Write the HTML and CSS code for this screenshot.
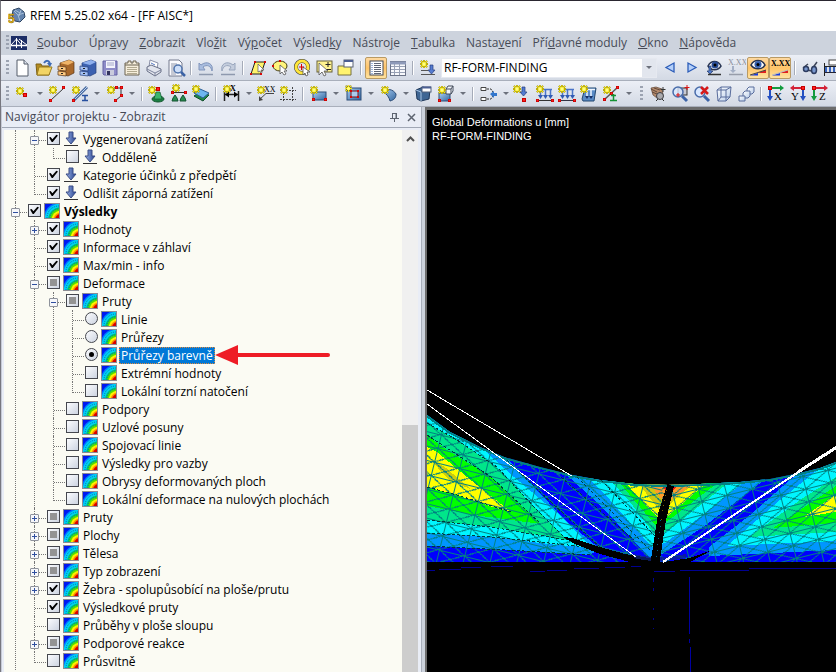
FILE: index.html
```html
<!DOCTYPE html>
<html lang="cs">
<head>
<meta charset="utf-8">
<title>RFEM 5.25.02 x64 - [FF AISC*]</title>
<link rel="stylesheet" href="styles.css">
</head>
<body>
<svg class="sprite" aria-hidden="true">
  <defs>
    <linearGradient id="blue" x1="0" y1="0" x2="1" y2="1"><stop offset="0" stop-color="#a9cdf2"/><stop offset="1" stop-color="#33669f"/></linearGradient>
    <linearGradient id="glass" x1="0" y1="0" x2="1" y2="1"><stop offset="0" stop-color="#fff"/><stop offset="1" stop-color="#b9cdea"/></linearGradient>
    <linearGradient id="loadfill" x1="0" x2="1"><stop offset="0" stop-color="#9db4e8"/><stop offset="1" stop-color="#23408c"/></linearGradient>
    <clipPath id="isoclip"><rect x="1" y="1" width="14" height="14"/></clipPath>
  </defs>
  <symbol id="iso" viewBox="0 0 16 16">
    <rect width="16" height="16" fill="#8c8c94"/>
    <g clip-path="url(#isoclip)">
      <rect x="1" y="1" width="14" height="14" fill="#0018f0"/>
      <circle cx="17" cy="17" r="18" fill="#0078ff"/>
      <circle cx="17" cy="17" r="16.500" fill="#00d0f4"/>
      <circle cx="17" cy="17" r="13" fill="#00c86c"/>
      <circle cx="17" cy="17" r="11.500" fill="#50e000"/>
      <circle cx="17" cy="17" r="9.500" fill="#fff000"/>
      <circle cx="17" cy="17" r="7.500" fill="#ff8c00"/>
      <circle cx="17" cy="17" r="6" fill="#d80000"/>
      <path d="M3 15C3 8 8 3 15 3M6 15C6 10 10 6 15 6" fill="none" stroke="#0078b4" stroke-dasharray="1 1"/>
    </g>
  </symbol>
  <symbol id="load" viewBox="0 0 16 16">
    <path d="M6 1h4v6h3l-5 6-5-6h3z" fill="url(#loadfill)" stroke="#3a4d85"/>
    <path d="M1 14.500h14" stroke="#333"/>
  </symbol>
  <symbol id="star" viewBox="0 0 9 9">
    <path d="M4.500 0v9M0 4.500h9M1 1l7 7M8 1l-7 7" stroke="#7d7000" stroke-width="2"/>
    <path d="M4.500 0v9M0 4.500h9M1 1l7 7M8 1l-7 7" stroke="#ffee10" stroke-width="1.200"/>
    <circle cx="4.500" cy="4.500" r="2" fill="#ffff80"/>
  </symbol>
  <symbol id="node" viewBox="0 0 4 4"><rect width="4" height="4" fill="#c80000"/><rect x="1" y="1" width="2" height="2" fill="#ff2020"/></symbol>
</svg>

<div class="window">
  <header class="titlebar">
    <svg class="applogo" viewBox="0 0 18 18"><path d="M5 3l6-2 5 4 1 5-5 5-5-1-3-5z" fill="#6484ae" stroke="#2d4463"/><path d="M6 4l4 4 6-2M10 8l2 6M7 3l5 3M13 3l-2 6" stroke="#b8cbe2" fill="none" stroke-width=".8"/><text x="0" y="16" class="logodigit">5</text></svg>
    <h1>RFEM 5.25.02 x64 - [FF AISC*]</h1>
  </header>

  <nav class="menubar">
    <span class="grip"></span>
    <svg class="doclogo" viewBox="0 0 16 14"><rect width="16" height="14" fill="#1d2e66"/><path d="M0 9.500h16" stroke="#fff" stroke-width="1.500"/><path d="M5.500 2v10M10.500 4v8M5.500 3L0 9M5.500 3l5 6M8 3l8 6" stroke="#fff" fill="none"/></svg>
    <a href="#"><u>S</u>oubor</a><a href="#">Úpr<u>a</u>vy</a><a href="#"><u>Z</u>obrazit</a><a href="#">Vlo<u>ž</u>it</a><a href="#">Vý<u>p</u>očet</a><a href="#">Výsled<u>k</u>y</a><a href="#">Nástro<u>j</u>e</a><a href="#"><u>T</u>abulka</a><a href="#">Nasta<u>v</u>ení</a><a href="#">Pří<u>d</u>avné moduly</a><a href="#"><u>O</u>kno</a><a href="#"><u>N</u>ápověda</a>
  </nav>

  <div class="toolbar">
    <span class="grip"></span>
    <button class="tool" aria-label="Nový"><svg viewBox="0 0 20 20"><path d="M5 2h7l4 4v12H5z" fill="#fff" stroke="#555c6b"/><path d="M12 2v4h4" fill="#dde3ee" stroke="#555c6b"/></svg></button>
    <button class="tool" aria-label="Otevřít"><svg viewBox="0 0 20 20"><path d="M2 6h5l1 2h7v9H3z" fill="#b48a20" stroke="#7d6115"/><path d="M5 9h13l-3 8H3z" fill="#f2d465" stroke="#9a7c1e"/><path d="M10 5c2-3 5-3 6 1" stroke="#3f6bb5" stroke-width="2" fill="none"/><path d="M13 5h5l-2 4z" fill="#3f6bb5"/></svg></button>
    <button class="tool" aria-label="Projekty"><svg viewBox="0 0 20 20"><path d="M4 5l9-3 5 2v11l-6 3-8-2z" fill="#a9682a" stroke="#57371b" stroke-width=".7"/><path d="M4 5l9-3 5 2-6 3z" fill="#f0b468"/><path d="M2 8l8 1v4l-8-1zM2 13l8 1v4l-8-1z" fill="#ffc980" stroke="#57371b" stroke-width=".7"/><path d="M5 10.500h2M5 15.500h2" stroke="#222"/></svg></button>
    <button class="tool" aria-label="Archiv"><svg viewBox="0 0 20 20"><path d="M4 5l9-3 5 2v11l-6 3-8-2z" fill="#3c61b0" stroke="#253f7c" stroke-width=".7"/><path d="M4 5l9-3 5 2-6 3z" fill="#8fb0ee"/><path d="M2 8l8 1v4l-8-1zM2 13l8 1v4l-8-1z" fill="#a3c0f4" stroke="#253f7c" stroke-width=".7"/><path d="M5 10.500h2M5 15.500h2" stroke="#222"/></svg></button>
    <button class="tool" aria-label="Uložit"><svg viewBox="0 0 20 20"><path d="M3 3h14v14H4l-1-1z" fill="#8e8cc8" stroke="#6563a2"/><rect x="6" y="3" width="9" height="7" fill="#f4f5fc"/><path d="M7 5h7M7 7h7" stroke="#a3a6c8"/><rect x="6" y="12" width="8" height="5" fill="#c9cbdc"/><rect x="7" y="13" width="3" height="4" fill="#33345e"/></svg></button>
    <button class="tool" aria-label="Protokol"><svg viewBox="0 0 20 20"><path d="M3 5h3V3h3v2h2V3h3v2h3v12H3z" fill="#f6eedb" stroke="#6b6250"/><path d="M3 7h14" stroke="#6b6250"/><path d="M5 9.500h10M5 11.500h10M5 13.500h10M5 15.500h10" stroke="#b1a98f"/></svg></button>
    <button class="tool" aria-label="Tisk"><svg viewBox="0 0 20 20"><path d="M5 9l1-7 8 3-1 6z" fill="#fff" stroke="#8a90a8"/><path d="M3 9l4-2 10 4v3l-6 4-8-5z" fill="#e2e5ee" stroke="#686f86"/><path d="M3 11l8 4 6-3M11 15v3" stroke="#7c849d" fill="none"/><path d="M7 5l4 2" stroke="#5578c2"/></svg></button>
    <button class="tool" aria-label="Náhled"><svg viewBox="0 0 20 20"><path d="M3 2h10l3 3v13H3z" fill="#fbfbff" stroke="#747b8e"/><path d="M5 6h6M5 8h5M5 10h4M5 12h4M5 14h5M5 16h5" stroke="#9198aa"/><circle cx="12" cy="11" r="4" fill="#cfe0fa" stroke="#4f73ac" stroke-width="1.500"/><path d="M15 14l4 4" stroke="#3b62a5" stroke-width="2.500"/></svg></button>
    <span class="sep"></span>
    <button class="tool" aria-label="Zpět"><svg viewBox="0 0 20 20"><path d="M3 5v7h6L7 9c4-3 8-1 9 4 2-7-5-11-11-6z" fill="#a9bddf" stroke="#8195bb"/><path d="M3 16.500h14" stroke="#8e99ae" stroke-width="1.500"/></svg></button>
    <button class="tool" aria-label="Znovu"><svg viewBox="0 0 20 20"><path d="M17 5v7h-6l2-3c-4-3-8-1-9 4-2-7 5-11 11-6z" fill="#c4cddd" stroke="#98a5bc"/><path d="M3 16.500h14" stroke="#8e99ae" stroke-width="1.500"/></svg></button>
    <span class="sep"></span>
    <button class="tool" aria-label="Výběr rovnoběžníkem"><svg viewBox="0 0 20 20"><path d="M7 4h10l-4 12H3z" fill="#fff36b" stroke="#222"/><path d="M10 6v8l2-1 1 3 1-1-1-3h3z" fill="#fff" stroke="#555" stroke-width=".7"/><use href="#node" x="6" y="3" width="2" height="2"/><use href="#node" x="16" y="3" width="2" height="2"/><use href="#node" x="2" y="15" width="2" height="2"/><use href="#node" x="12" y="15" width="2" height="2"/></svg></button>
    <button class="tool" aria-label="Výběr elipsou"><svg viewBox="0 0 20 20"><ellipse cx="10" cy="8" rx="7" ry="5" fill="#fff47c" stroke="#443c12"/><path d="M10 7v9l2-2 2 3 2-1-2-3h3z" fill="#fff" stroke="#555" stroke-width=".8"/><use href="#node" x="2" y="7" width="2" height="2"/><use href="#node" x="9" y="2" width="2" height="2"/></svg></button>
    <button class="tool" aria-label="Výběr prstencem"><svg viewBox="0 0 20 20"><circle cx="10" cy="9" r="6" fill="none" stroke="#333" stroke-width="4"/><circle cx="10" cy="9" r="6" fill="none" stroke="#ffe63a" stroke-width="3"/><path d="M11 9v8l2-2 1 3 2-1-1-3h3z" fill="#fff" stroke="#555" stroke-width=".8"/><path d="M7 9h5M9.500 6v6" stroke="#d00"/></svg></button>
    <button class="tool" aria-label="Výběr"><svg viewBox="0 0 20 20"><rect x="3" y="3" width="15" height="11" fill="#fff390" stroke="#666038"/><path d="M14 4v5M11.500 6.500h5M12 11.500h5" stroke="#222"/><path d="M5 5v12l3-3 2 4 2-1-2-4h4z" fill="#fff" stroke="#555" stroke-width=".8"/></svg></button>
    <button class="tool" aria-label="Složka"><svg viewBox="0 0 20 20"><path d="M2 8h13v9H2z" fill="#fff36e" stroke="#777140"/><rect x="8" y="2" width="9" height="7" fill="#fff" stroke="#5b6374"/><path d="M8 3h9" stroke="#4c5f93" stroke-width="2"/></svg></button>
    <span class="sep"></span>
    <button class="tool on" aria-label="Navigátor"><svg viewBox="0 0 20 20"><rect x="4" y="3" width="13" height="14" fill="#fff" stroke="#444a57"/><path d="M8 5.500h7M8 7.500h7M8 9.500h7M8 11.500h7M8 13.500h7M8 15.500h7" stroke="#5f6675"/><path d="M6 5v11" stroke="#3f6bb5" stroke-dasharray="1 1"/></svg></button>
    <button class="tool" aria-label="Tabulky"><svg viewBox="0 0 20 20"><rect x="2.500" y="3.500" width="15" height="14" fill="#f8f9fc" stroke="#6b7387"/><path d="M2 5h16" stroke="#8e9ab9" stroke-width="3"/><path d="M6.500 6v11M11.500 6v11M3 8.500h14M3 11.500h14M3 14.500h14" stroke="#98a1b5"/></svg></button>
    <span class="sep"></span>
    <button class="tool" aria-label="Nový zatěžovací stav"><svg viewBox="0 0 20 20"><use href="#star" x="2" y="2" width="8" height="8"/><path d="M12 7h3v5h2l-3.500 4L10 12h2z" fill="#547bd0" stroke="#263e80" stroke-width=".7"/><path d="M3 12.500h7M3 16.500h14" stroke="#555"/></svg></button>
    <span class="combo"><select aria-label="Zatěžovací stav"><option>RF-FORM-FINDING</option></select></span>
    <button class="tool" aria-label="Předchozí"><svg viewBox="0 0 20 20"><path d="M14 5v9L6 9.500z" fill="#b5d0fa" stroke="#2b5cb8" stroke-width="1.300"/></svg></button>
    <button class="tool" aria-label="Následující"><svg viewBox="0 0 20 20"><path d="M6 5v9l8-4.500z" fill="#b5d0fa" stroke="#2b5cb8" stroke-width="1.300"/></svg></button>
    <button class="tool" aria-label="Zobrazit zatížení"><svg viewBox="0 0 20 20"><path d="M4 8c3-6 10-6 13 0-3 5-10 5-13 0z" fill="#fff" stroke="#283452" stroke-width="1.500"/><circle cx="11" cy="7" r="3.500" fill="#294d96"/><circle cx="11" cy="7" r="1.500"/><path d="M5 8h2v5h2l-3 3-3-3h2z" fill="#517cce" stroke="#233a6b" stroke-width=".7"/><path d="M4 16.500h13" stroke="#333" stroke-width="1.500"/></svg></button>
    <button class="tool" aria-label="Hodnoty zatížení"><svg viewBox="0 0 20 20"><text x="2" y="7" class="xx dim">X.XX</text><path d="M6 8h2v4h2l-3 3-3-3h2z" fill="#a3afc5"/><path d="M3 16.500h14" stroke="#979daa" stroke-width="1.500"/></svg></button>
    <button class="tool on" aria-label="Zobrazit výsledky"><svg viewBox="0 0 20 20"><path d="M3 7c3-6 11-6 14 0-3 5-11 5-14 0z" fill="#fff" stroke="#26324f" stroke-width="1.500"/><circle cx="10" cy="6.500" r="3.500" fill="#355fae"/><circle cx="10" cy="6.500" r="1.500"/><path d="M2 17.500h8V15z" fill="#173be0"/><path d="M10 15l8-3v3h-8z" fill="#e02020"/><path d="M2 17l16-5" stroke="#444"/></svg></button>
    <button class="tool on" aria-label="Hodnoty výsledků"><svg viewBox="0 0 20 20"><text x="1" y="8" class="xx">X.XX</text><path d="M2 17.500h8V15z" fill="#173be0"/><path d="M10 15l8-3v3h-8z" fill="#e02020"/><path d="M2 17l16-5" stroke="#bbb"/></svg></button>
    <span class="sep"></span>
    <button class="tool" aria-label="Brýle"><svg viewBox="0 0 20 20"><path d="M3 10l5-4M12 11l5-7M8 12l3 1" stroke="#3c4458" stroke-width="1.500"/><ellipse cx="6" cy="11" rx="2.500" ry="2.500" fill="#7897ce" stroke="#2d3c60" stroke-width="1.500"/><ellipse cx="14" cy="12" rx="2.500" ry="3.500" fill="#7897ce" stroke="#2d3c60" stroke-width="1.500"/></svg></button>
    <button class="tool" aria-label="Soubor zatížení"><svg viewBox="0 0 20 20"><rect x="7" y="2" width="10" height="5" fill="#fff" stroke="#444"/><path d="M2.500 5v13M2 8.500h15" stroke="#222"/><path d="M4 9v5M8 9v5M12 9v5M16 9v5" stroke="#3864bd" stroke-width="2"/><path d="M2 14.500h16" stroke="#223"/></svg></button>
  </div>

  <div class="toolbar">
    <span class="grip"></span>
    <button class="tool" aria-label="Uzel"><svg viewBox="0 0 20 20"><use href="#star" x="4" y="3" width="8" height="8"/><use href="#node" x="11" y="9" width="4" height="4"/></svg></button><button class="drop" aria-label="Více"></button>
    <button class="tool" aria-label="Linie"><svg viewBox="0 0 20 20"><path d="M4 16L17 4" stroke="#333"/><use href="#star" x="2" y="2" width="8" height="8"/><use href="#node" x="2" y="15" width="3" height="3"/><use href="#node" x="15" y="2" width="3" height="3"/></svg></button>
    <button class="tool" aria-label="Prut"><svg viewBox="0 0 20 20"><path d="M5 16L18 3" stroke="#4c6b9e" stroke-width="3"/><path d="M5 16L18 3" stroke="#b5d0f4"/><use href="#star" x="3" y="2" width="8" height="8"/><use href="#node" x="3" y="15" width="3" height="3"/><path d="M13 11.500h6M16 12v5M13 16.500h6" stroke="#27509f" stroke-width="1.500"/></svg></button><button class="drop" aria-label="Více"></button>
    <button class="tool" aria-label="Polylinie"><svg viewBox="0 0 20 20"><path d="M8 4h9v8l-6 5" stroke="#333" fill="none"/><use href="#star" x="3" y="2" width="8" height="8"/><use href="#node" x="11" y="2" width="3" height="3"/><use href="#node" x="16" y="2" width="3" height="3"/><use href="#node" x="16" y="10" width="3" height="3"/><use href="#node" x="10" y="15" width="3" height="3"/></svg></button><button class="drop" aria-label="Více"></button>
    <span class="sep"></span>
    <button class="tool" aria-label="Podpora"><svg viewBox="0 0 20 20"><ellipse cx="11" cy="15" rx="6" ry="3" fill="#1c7e43" stroke="#11562c"/><path d="M9 8h4l2 7H7z" fill="#3cb56c" stroke="#11562c" stroke-width=".7"/><use href="#star" x="1" y="2" width="8" height="8"/><use href="#node" x="9" y="3" width="4" height="4"/></svg></button>
    <button class="tool" aria-label="Liniová podpora"><svg viewBox="0 0 20 20"><path d="M3 8.500h14" stroke="#333"/><path d="M6 11l2 3 1 3H3l1-3zM14 11l2 3 1 3h-6l1-3z" fill="#278d50" stroke="#145331"/><use href="#star" x="3" y="0" width="8" height="8"/><use href="#node" x="2" y="7" width="3" height="3"/><use href="#node" x="15" y="7" width="3" height="3"/></svg></button>
    <button class="tool" aria-label="Plošná podpora"><svg viewBox="0 0 20 20"><path d="M3 12l6-4 9 3-6 6z" fill="#208a49" stroke="#104e2b"/><path d="M3 9l6-4 9 4-6 5z" fill="#6db6f0" stroke="#2d6097"/><use href="#star" x="1" y="1" width="8" height="8"/></svg></button>
    <span class="sep"></span>
    <button class="tool" aria-label="Kóta"><svg viewBox="0 0 20 20"><path d="M3.500 7v10M17.500 7v10M4 10.500h13" stroke="#222" stroke-width="1.500"/><path d="M4 10.500l4-3v6zM17 10.500l-4-3v6z"/><use href="#star" x="2" y="1" width="8" height="8"/><text x="9" y="7" class="xx">X</text></svg></button><button class="drop" aria-label="Více"></button>
    <button class="tool" aria-label="Poznámka"><svg viewBox="0 0 20 20"><path d="M18 9.500h-8L3 16" stroke="#444" fill="none"/><path d="M3 17v-5l4 4z" fill="#444"/><use href="#star" x="1" y="2" width="8" height="8"/><text x="8" y="8" class="xx thin">XX</text></svg></button>
    <button class="tool" aria-label="Rastr"><svg viewBox="0 0 20 20"><path d="M2 6.500h16M2 15.500h16M5.500 3v15M14.500 3v15" stroke="#444" stroke-dasharray="2 1"/><use href="#star" x="2" y="2" width="8" height="8"/></svg></button>
    <span class="sep"></span>
    <button class="tool" aria-label="Plocha"><svg viewBox="0 0 20 20"><rect x="5" y="8" width="13" height="8" fill="url(#blue)" stroke="#2c4c77"/><use href="#star" x="2" y="2" width="8" height="8"/><use href="#node" x="4" y="14" width="3" height="3"/><use href="#node" x="16" y="14" width="3" height="3"/></svg></button><button class="drop" aria-label="Více"></button>
    <button class="tool" aria-label="Otvor"><svg viewBox="0 0 20 20"><rect x="4" y="4" width="14" height="12" fill="url(#blue)" stroke="#2c4c77"/><rect x="8" y="7" width="7" height="6" fill="#a9cbee" stroke="#70181c"/><use href="#star" x="2" y="1" width="7" height="7"/><use href="#node" x="7" y="6" width="2" height="2"/><use href="#node" x="14" y="6" width="2" height="2"/><use href="#node" x="7" y="12" width="2" height="2"/><use href="#node" x="14" y="12" width="2" height="2"/></svg></button><button class="drop" aria-label="Více"></button>
    <button class="tool" aria-label="Zakřivená plocha"><svg viewBox="0 0 20 20"><path d="M5 8c4-4 10-3 13 2 0 4-2 6-6 7-1-4-3-7-7-9z" fill="url(#blue)" stroke="#2c4c77"/><use href="#star" x="3" y="2" width="8" height="8"/></svg></button><button class="drop" aria-label="Více"></button>
    <button class="tool" aria-label="Těleso"><svg viewBox="0 0 20 20"><path d="M3 6l7-3 7 3-1 9-8 2-4-2z" fill="#3f6694" stroke="#1e3759"/><path d="M3 6l5 2v9" fill="none" stroke="#a9c6e6"/><rect x="9" y="3" width="9" height="5" fill="#fff" stroke="#52617b"/><path d="M9 3.500h9" stroke="#4c5f93" stroke-width="2"/></svg></button>
    <button class="tool" aria-label="Kvádr"><svg viewBox="0 0 20 20"><rect x="4" y="9" width="11" height="8" fill="url(#blue)" stroke="#2c4c77"/><path d="M11 5h5v5h-5zM11 5l2-3h5v5l-2 3M16 5l2-3" fill="#f3f6fb" stroke="#444c5c"/><use href="#star" x="3" y="2" width="8" height="8"/><use href="#node" x="3" y="15" width="3" height="3"/><use href="#node" x="13" y="15" width="3" height="3"/></svg></button><button class="drop" aria-label="Více"></button>
    <span class="sep"></span>
    <button class="tool" aria-label="Spojit"><svg viewBox="0 0 20 20"><path d="M3 3.500h5v3H3zM3 13.500h5v3H3z" fill="#fff" stroke="#444"/><path d="M9 5h4l2 3M9 15h4l2-3" stroke="#333" fill="none" stroke-dasharray="2 1"/><path d="M12 10l4-3v2h3v3h-3v2z" fill="#3276cc"/></svg></button><button class="drop" aria-label="Více"></button>
    <button class="tool" aria-label="Uzlové zatížení"><svg viewBox="0 0 20 20"><path d="M9 3h3v5h2l-3.500 4L7 8h2z" fill="#527bd2" stroke="#243d7f" stroke-width=".7"/><use href="#star" x="0" y="1" width="8" height="8"/><use href="#node" x="9" y="14" width="4" height="4"/></svg></button>
    <button class="tool" aria-label="Zatížení prutu"><svg viewBox="0 0 20 20"><path d="M4 5.500h13M5.500 6v6M10.500 6v6M15.500 6v6" stroke="#4a74c8" stroke-width="1.500"/><path d="M3 11h5l-2.500 4zM8 11h5l-2.500 4zM13 11h5l-2.500 4z" fill="#315bb4"/><path d="M3 16.500h15" stroke="#333"/><use href="#star" x="1" y="1" width="8" height="8"/><use href="#node" x="1" y="15" width="3" height="3"/><use href="#node" x="16" y="15" width="3" height="3"/></svg></button>
    <button class="tool" aria-label="Zatížení linie"><svg viewBox="0 0 20 20"><path d="M4 5.500h13M5.500 6v6M10.500 6v6M15.500 6v6" stroke="#4a74c8" stroke-width="1.500"/><path d="M3 11h5l-2.500 4zM8 11h5l-2.500 4zM13 11h5l-2.500 4z" fill="#315bb4"/><path d="M2 16.500h16" stroke="#334"/><use href="#star" x="1" y="1" width="8" height="8"/><use href="#node" x="1" y="15" width="3" height="3"/><use href="#node" x="16" y="15" width="3" height="3"/></svg></button>
    <button class="tool" aria-label="Zatížení plochy"><svg viewBox="0 0 20 20"><path d="M3 15l3-11h11l-2 13H4z" fill="#5a8bc6" stroke="#23476f"/><path d="M8 5v7M12 5v7M7 5.500h9" stroke="#eef5ff" stroke-width="1.500"/><path d="M6 12l2 3 2-3M10 12l2 3 2-3" fill="#152f66"/><use href="#star" x="1" y="1" width="8" height="8"/></svg></button>
    <button class="tool" aria-label="Imperfekce"><svg viewBox="0 0 20 20"><path d="M4 15L17 3" stroke="#555" stroke-width="1.500"/><use href="#star" x="2" y="2" width="8" height="8"/><use href="#node" x="2" y="14" width="3" height="3"/><use href="#node" x="9" y="8" width="3" height="3"/><use href="#node" x="15" y="2" width="3" height="3"/><path d="M12.500 10v7M9 16.500h7M10 11.500h5" stroke="#149333" stroke-width="1.500"/></svg></button><button class="drop" aria-label="Více"></button>
    <span class="grip inner"></span>
    <button class="tool" aria-label="Posun"><svg viewBox="0 0 20 20"><path d="M3 4l5-1 6 2 1 6-6 3-4-3z" fill="#b58a6c" stroke="#60483a" stroke-width=".7"/><path d="M3 5l6 3M4 8l5 2M6 4l6 2" stroke="#60483a"/><circle cx="12" cy="12" r="3.500" fill="#a9a9ad" stroke="#3d3d42"/><path d="M15 3v5M12.500 5.500h5M8 17l2-2M16 17l-2-2" stroke="#333"/></svg></button>
    <button class="tool" aria-label="Zvětšit oknem"><svg viewBox="0 0 20 20"><rect x="8" y="4" width="9" height="7" fill="#c7c9d2" stroke="#333"/><circle cx="8" cy="8" r="5" fill="#d9e8ff" fill-opacity=".8" stroke="#496caa" stroke-width="1.500"/><path d="M12 12l5 5" stroke="#3c63a7" stroke-width="3"/><path d="M17 1v5M14.500 3.500h5M8 9v4M6 11h4" stroke="#d11"/></svg></button>
    <button class="tool" aria-label="Zvětšit vše"><svg viewBox="0 0 20 20"><circle cx="8" cy="8" r="5" fill="#d9e8ff" stroke="#496caa" stroke-width="1.500"/><path d="M12 12l5 5" stroke="#3c63a7" stroke-width="3"/><path d="M9 3l7 7M16 3l-7 7" stroke="#d61a1a" stroke-width="2.500"/></svg></button>
    <button class="tool" aria-label="Izometrie"><svg viewBox="0 0 20 20"><path d="M3 6l4-3h10l-1 10-4 4H4z" fill="url(#glass)" stroke="#596c9c"/><path d="M3 6h9v11M12 6l5-3M7 3v10h9M4 17l3-4" fill="none" stroke="#596c9c"/></svg></button>
    <button class="tool" aria-label="Pohled"><svg viewBox="0 0 20 20"><path d="M11 5l2-2h5v5l-2 2h-5z" fill="url(#glass)" stroke="#596c9c"/><path d="M7 9l2-2h5v5l-2 2H7z" fill="url(#glass)" stroke="#596c9c"/><path d="M3 12h6v5H3z" fill="url(#glass)" stroke="#596c9c"/></svg></button>
    <span class="sep"></span>
    <button class="tool" aria-label="Pohled X"><svg viewBox="0 0 20 20"><path d="M4 4h11" stroke="#129b3e" stroke-width="2"/><path d="M14 1l4 3-4 3z" fill="#129b3e"/><path d="M4 4v10" stroke="#234fc1" stroke-width="2"/><path d="M1 12l3 5 3-5z" fill="#234fc1"/><use href="#node" x="2" y="2" width="4" height="4"/><text x="8" y="16" class="axis">X</text></svg></button>
    <button class="tool" aria-label="Pohled Y"><svg viewBox="0 0 20 20"><path d="M5 4h11" stroke="#d32136" stroke-width="2"/><path d="M6 1L2 4l4 3z" fill="#d32136"/><path d="M15 4v10" stroke="#234fc1" stroke-width="2"/><path d="M12 12l3 5 3-5z" fill="#234fc1"/><use href="#node" x="13" y="2" width="4" height="4"/><text x="3" y="16" class="axis">Y</text></svg></button>
    <button class="tool" aria-label="Pohled Z"><svg viewBox="0 0 20 20"><path d="M4 4h11" stroke="#d32136" stroke-width="2"/><path d="M14 1l4 3-4 3z" fill="#d32136"/><path d="M4 4v10" stroke="#129b3e" stroke-width="2"/><path d="M1 12l3 5 3-5z" fill="#129b3e"/><use href="#node" x="2" y="2" width="4" height="4"/><text x="9" y="16" class="axis">Z</text></svg></button>
  </div>

  <main class="work">
    <section class="dock">
      <div class="dockhead">
        <h2>Navigátor projektu - Zobrazit</h2>
        <button aria-label="Připnout"><svg viewBox="0 0 9 9"><path d="M2.500 0v5M6 0v5M2 .5h5M0 5.500h9M4.500 6v3" stroke="#5d6470" fill="none"/><path d="M6 0h1v5H6z" fill="#5d6470"/></svg></button>
        <button aria-label="Zavřít"><svg viewBox="0 0 9 9"><path d="M1 1l7 7M8 1L1 8" stroke="#5d6470" stroke-width="1.500"/></svg></button>
      </div>
      <div class="dockbody">
        <ul class="tree">
          <li><ul>
            <li><div class="row"><button class="exp" aria-label="Sbalit"></button><label><input type="checkbox" checked><svg><use href="#load"/></svg><span>Vygenerovaná zatížení</span></label></div>
              <ul><li><div class="row"><label><input type="checkbox"><svg><use href="#load"/></svg><span>Odděleně</span></label></div></li></ul></li>
            <li><div class="row"><label><input type="checkbox" checked><svg><use href="#load"/></svg><span>Kategorie účinků z předpětí</span></label></div></li>
            <li><div class="row"><label><input type="checkbox" checked><svg><use href="#load"/></svg><span>Odlišit záporná zatížení</span></label></div></li>
          </ul></li>
          <li class="more"><div class="row"><button class="exp" aria-label="Sbalit"></button><label class="strong"><input type="checkbox" checked><svg><use href="#iso"/></svg><span>Výsledky</span></label></div>
            <ul>
              <li><div class="row"><button class="exp plus" aria-label="Rozbalit"></button><label><input type="checkbox" checked><svg><use href="#iso"/></svg><span>Hodnoty</span></label></div></li>
              <li><div class="row"><label><input type="checkbox" checked><svg><use href="#iso"/></svg><span>Informace v záhlaví</span></label></div></li>
              <li><div class="row"><label><input type="checkbox" checked><svg><use href="#iso"/></svg><span>Max/min - info</span></label></div></li>
              <li><div class="row"><button class="exp" aria-label="Sbalit"></button><label><input type="checkbox" class="partial"><svg><use href="#iso"/></svg><span>Deformace</span></label></div>
                <ul>
                  <li><div class="row"><button class="exp" aria-label="Sbalit"></button><label><input type="checkbox" class="partial"><svg><use href="#iso"/></svg><span>Pruty</span></label></div>
                    <ul>
                      <li><div class="row"><label><input type="radio" name="bars"><svg><use href="#iso"/></svg><span>Linie</span></label></div></li>
                      <li><div class="row"><label><input type="radio" name="bars"><svg><use href="#iso"/></svg><span>Průřezy</span></label></div></li>
                      <li><div class="row"><label class="selected"><input type="radio" name="bars" checked><svg><use href="#iso"/></svg><span>Průřezy barevně</span></label>
                        <svg class="callout" viewBox="0 0 116 20"><path d="M20 10h93" stroke="#ee1c25" stroke-width="4" stroke-linecap="round"/><path d="M0 10L23 0v20z" fill="#ee1c25"/></svg></div></li>
                      <li><div class="row"><label><input type="checkbox"><svg><use href="#iso"/></svg><span>Extrémní hodnoty</span></label></div></li>
                      <li><div class="row"><label><input type="checkbox"><svg><use href="#iso"/></svg><span>Lokální torzní natočení</span></label></div></li>
                    </ul></li>
                  <li><div class="row"><label><input type="checkbox"><svg><use href="#iso"/></svg><span>Podpory</span></label></div></li>
                  <li><div class="row"><label><input type="checkbox"><svg><use href="#iso"/></svg><span>Uzlové posuny</span></label></div></li>
                  <li><div class="row"><label><input type="checkbox"><svg><use href="#iso"/></svg><span>Spojovací linie</span></label></div></li>
                  <li><div class="row"><label><input type="checkbox"><svg><use href="#iso"/></svg><span>Výsledky pro vazby</span></label></div></li>
                  <li><div class="row"><label><input type="checkbox"><svg><use href="#iso"/></svg><span>Obrysy deformovaných ploch</span></label></div></li>
                  <li><div class="row"><label><input type="checkbox"><svg><use href="#iso"/></svg><span>Lokální deformace na nulových plochách</span></label></div></li>
                </ul></li>
              <li><div class="row"><button class="exp plus" aria-label="Rozbalit"></button><label><input type="checkbox" class="partial"><svg><use href="#iso"/></svg><span>Pruty</span></label></div></li>
              <li><div class="row"><button class="exp plus" aria-label="Rozbalit"></button><label><input type="checkbox" class="partial"><svg><use href="#iso"/></svg><span>Plochy</span></label></div></li>
              <li><div class="row"><button class="exp plus" aria-label="Rozbalit"></button><label><input type="checkbox" class="partial"><svg><use href="#iso"/></svg><span>Tělesa</span></label></div></li>
              <li><div class="row"><button class="exp plus" aria-label="Rozbalit"></button><label><input type="checkbox" class="partial"><svg><use href="#iso"/></svg><span>Typ zobrazení</span></label></div></li>
              <li><div class="row"><button class="exp plus" aria-label="Rozbalit"></button><label><input type="checkbox" checked><svg><use href="#iso"/></svg><span>Žebra - spolupůsobící na ploše/prutu</span></label></div></li>
              <li><div class="row"><label><input type="checkbox" checked><svg><use href="#iso"/></svg><span>Výsledkové pruty</span></label></div></li>
              <li><div class="row"><label><input type="checkbox"><svg><use href="#iso"/></svg><span>Průběhy v ploše sloupu</span></label></div></li>
              <li><div class="row"><button class="exp plus" aria-label="Rozbalit"></button><label><input type="checkbox" class="partial"><svg><use href="#iso"/></svg><span>Podporové reakce</span></label></div></li>
              <li><div class="row"><label><input type="checkbox"><svg><use href="#iso"/></svg><span>Průsvitně</span></label></div></li>
            </ul></li>
        </ul>
        <div class="scroll">
          <button aria-label="Nahoru"><svg viewBox="0 0 9 6"><path d="M1 5l3.500-3.500L8 5" fill="none" stroke="#505050" stroke-width="2"/></svg></button>
          <span class="track"></span><span class="thumb"></span>
        </div>
      </div>
    </section>

    <section class="view">
      <p>Global Deformations u [mm]<br>RF-FORM-FINDING</p>
      <svg class="model" viewBox="427 110 409 562" preserveAspectRatio="xMinYMin slice" shape-rendering="crispEdges">
        <defs>
          <clipPath id="shell"><path d="M427 415L450 432 480 447 504 457 540 467 572 475 600 480 634 484 668 485 700 484 740 482 770 479 800 473 820 468 836 462V562H427z"/></clipPath>
          <pattern id="meshl" width="26" height="14" patternUnits="userSpaceOnUse" patternTransform="rotate(14)"><path d="M0 0L26 14M0 14L26 0M0 7H26M13 0V14" stroke="#008282" fill="none"/></pattern>
          <pattern id="meshr" width="26" height="13" patternUnits="userSpaceOnUse" patternTransform="rotate(-14)"><path d="M0 0L26 13M0 13L26 0M0 6H26M13 0V13" stroke="#008282" fill="none"/></pattern>
        </defs>
        <g clip-path="url(#shell)">
          <path fill="#0000ff" d="M427 400H836V562H427z"/>
          <!-- left lobe, outer to inner -->
          <path fill="#0096ff" d="M427 400L480 440 507 458 534 487 565 520 600 549 590 555 507 550 427 546z"/>
          <path fill="#00f5ff" d="M427 400L460 436 484 450 514 477 557 513 587 543 584 547 557 545 491 537 427 533z"/>
          <path fill="#00e68a" d="M427 423L457 440 497 467 534 507 567 540 491 527 427 520z"/>
          <path fill="#00ff00" d="M427 435L444 448 491 477 541 524 474 515 427 506z"/>
          <path fill="#ffff00" d="M427 447L437 452 467 477 511 512 486 505 457 495 427 487z"/>
          <path fill="#cccc10" d="M428 457L446 468 472 490 448 479z"/>
          <!-- right lobe -->
          <path fill="#0096ff" d="M836 455L799 472 750 515 709 547V556L836 550z"/>
          <path fill="#00f5ff" d="M836 460L820 468 780 500 727 546 836 541z"/>
          <path fill="#00e68a" d="M836 477L800 500 749 537 836 532z"/>
          <path fill="#00ff00" d="M836 486L800 510 773 528 836 523z"/>
          <path fill="#ffff00" d="M836 494L804 517 836 512z"/>
          <!-- central fan -->
          <path fill="#0096ff" d="M561 470L600 505 650 558 662 554 706 525 772 474z"/>
          <path fill="#00f5ff" d="M580 470L610 500 652 547 665 543 700 517 754 474z"/>
          <path fill="#00e68a" d="M601 470L630 502 655 535 668 531 738 475z"/>
          <path fill="#00ff00" d="M609 470L634 500 657 527 669 520 728 475z"/>
          <path fill="#ffff00" d="M618 475L658 518 668 516 716 475z"/>
          <path fill="#d0c810" d="M632 475L660 511 668 506 703 475z"/>
          <path fill="#ff9a28" d="M645 478L662 500 668 502 696 482z"/>
          <path fill="#ee1414" d="M658 483h22l-11 11z"/>
          <path fill="url(#meshl)" d="M427 400H662V562H427z"/>
          <path fill="url(#meshr)" d="M662 400H836V562H662z"/>
          <path fill="none" stroke="#008282" stroke-width="4" d="M427 415L450 432 480 447 504 457 540 467 572 475 600 480 634 484 668 485 700 484 740 482 770 479 800 473 820 468 836 462"/>
          <path fill="none" stroke="#003c3c" stroke-dasharray="3 2" d="M427 423L457 440 497 467 534 507 567 540M427 435L491 477 541 524M427 520L491 527 567 540M427 533L491 537 587 547M427 546L507 550 590 555M507 460L540 492 600 547M561 477L634 540M577 477L650 550M601 480L655 536M427 487L457 495 511 512"/>
          <path fill="#000" d="M563 537L572 538 600 547 625 554 655 559V562H630L600 554 575 544zM664 562L690 558 712 550 690 562z"/>
          <path fill="none" stroke="#102880" stroke-width="4" d="M634 556Q656 562 686 556" opacity=".7"/>
        </g>
        <path fill="#000" d="M667 485L674 486 666 520 659 566 650 566 658 514z"/>
        <path stroke="#806000" stroke-dasharray="1 4" d="M667 490L661 520" fill="none"/>
        <path stroke="#006080" stroke-dasharray="1 5" d="M661 520L656 560" fill="none"/>
        <path stroke="#fff" fill="none" d="M427 390L572 476M427 404L636 557"/>
        <path stroke="#fff" stroke-width="2" fill="none" d="M663 562L800 471"/>
        <path stroke="#fff" stroke-width="3" fill="none" d="M798 472L837 447"/>
        <path stroke="#000090" fill="none" d="M427 570h8M439 569h22M461 567h20M491 566h22M530 571h15M547 570h20M574 568h25M605 567h20M631 566h10M654 571h21M680 570h69M749 568h87M653 578v4M653 588v3M653 608v2M653 618v2M653 628v1"/>
        <path stroke="#0000a0" fill="none" d="M689.500 577V634M689.500 639V643M690.500 647V672"/>
      </svg>
    </section>
  </main>
</div>
</body>
</html>
```
FILE: styles.css
```css
* { box-sizing: border-box; }

body {
  margin: 0;
  color: #000;
  font: 12px/18px "Open Sans", "Noto Sans", sans-serif;
}

button {
  padding: 0;
  border: 0;
  background: none;
}

svg { display: block; }
.sprite { position: absolute; width: 0; height: 0; }

.window {
  display: flex;
  flex-direction: column;
  height: 100vh;
  overflow: hidden;
  border-top: 1px solid #2a2630;
  border-left: 1px solid #77777f;
  background: #ccd2dc;
}

/* Title and menu */
.titlebar {
  display: flex;
  flex: none;
  align-items: center;
  gap: 4px;
  height: 30px;
  padding-left: 7px;
  background: #fff;
}
.titlebar h1 { margin: 0; font-size: 12px; font-weight: 400; }
.applogo { width: 18px; height: 18px; }
.logodigit { fill: #f5c518; stroke: #6b5200; stroke-width: 0.5px; font: bold 12px "Liberation Sans", sans-serif; }

.menubar {
  display: flex;
  flex: none;
  align-items: center;
  height: 24px;
  background: #cdd3dd;
}
.doclogo { width: 16px; height: 14px; margin: 0 4px 0 0; }
.menubar a {
  padding: 0 5px 0 6px;
  color: #474b57;
  text-decoration: none;
  white-space: nowrap;
}

.grip {
  flex: none;
  width: 3px;
  height: 16px;
  margin: 0 2px 0 5px;
  background: repeating-linear-gradient(#9ca3b1 0 2px, transparent 2px 4px);
}
.grip.inner { margin: 0 4px 0 5px; }

/* Toolbars */
.toolbar {
  display: flex;
  flex: none;
  align-items: center;
  height: 26px;
  overflow: hidden;
  border-bottom: 1px solid #a9afbb;
  background: linear-gradient(#eceff6, #d3d9e4);
}
.toolbar .tool {
  display: flex;
  flex: none;
  align-items: center;
  justify-content: center;
  width: 22px;
  height: 22px;
}
.toolbar .tool svg { flex: none; width: 20px; height: 20px; }
.toolbar .on {
  border: 1px solid #b99a63;
  border-radius: 2px;
  background: linear-gradient(#ffd9a0, #ffc468 50%, #ffe3a0);
}
.sep {
  flex: none;
  width: 2px;
  height: 14px;
  margin: 0 3px;
  border-left: 1px solid #a5abb8;
  border-right: 1px solid #fff;
}
.drop {
  display: flex;
  flex: none;
  justify-content: center;
  width: 13px;
}
.drop::before {
  border: 3px solid transparent;
  border-top-color: #6c717c;
  border-bottom: 0;
  content: "";
}
.xx { font: bold 8px "Liberation Serif", serif; }
.thin { font-weight: 400; }
.dim { fill: #8a8f9b; font-weight: 400; }
.axis { font: 11px "Liberation Serif", serif; }

.combo {
  position: relative;
  flex: none;
  width: 216px;
  height: 20px;
  margin: 0 2px;
  border: 1px solid #e6e9f0;
  background: #fff;
}
.combo select {
  width: 100%;
  height: 18px;
  padding: 0 2px;
  border: 0;
  appearance: none;
  background: none;
  color: #000;
  font: inherit;
}
.combo::after {
  position: absolute;
  top: 0;
  right: 0;
  width: 14px;
  height: 18px;
  background: #e2e6ee;
  content: "";
}
.combo::before {
  position: absolute;
  z-index: 1;
  top: 7px;
  right: 4px;
  border: 3px solid transparent;
  border-top-color: #6c717c;
  border-bottom: 0;
  content: "";
}

/* Working area */
.work {
  display: flex;
  flex: 1;
  min-height: 0;
}
.dock {
  display: flex;
  flex: 0 0 421px;
  flex-direction: column;
  border-right: 1px solid #a9afbb;
  border-left: 1px solid #c6cad6;
  background: #e9edf6;
}
.dockhead {
  display: flex;
  flex: none;
  align-items: center;
  gap: 8px;
  height: 21px;
  padding: 0 5px 0 3px;
  border-bottom: 1px solid #a0a7b5;
}
.dockhead h2 {
  flex: 1;
  margin: 0;
  color: #454955;
  font-size: 12px;
  font-weight: 400;
}
.dockhead svg { width: 9px; height: 9px; }
.dockbody {
  display: flex;
  flex: 1;
  min-height: 0;
  margin: 2px 3px 0 2px;
  background: #fbfbf3;
}

/* Tree */
.tree { flex: 1; overflow: hidden; }
.tree, .tree ul { margin: 0; padding: 0; list-style: none; }
.tree ul { padding-left: 19px; }
.tree li { position: relative; }
.tree li::before {
  position: absolute;
  top: 0;
  bottom: 0;
  left: 11px;
  border-left: 1px dotted #777;
  content: "";
}
.tree li:last-child:not(.more)::before { bottom: auto; height: 11px; }
.row {
  position: relative;
  display: flex;
  align-items: center;
  height: 18px;
  padding-left: 24px;
}
.row::before {
  position: absolute;
  top: 10px;
  left: 12px;
  width: 11px;
  border-top: 1px dotted #777;
  content: "";
}
.exp {
  position: absolute;
  top: 6px;
  left: 7px;
  width: 9px;
  height: 9px;
  border: 1px solid #8f939c;
  border-radius: 1px;
  background: linear-gradient(#2f4f9f, #2f4f9f) no-repeat center / 5px 1px, #f6f7fa;
}
.exp.plus {
  background: linear-gradient(#2f4f9f, #2f4f9f) no-repeat center / 5px 1px,
    linear-gradient(#2f4f9f, #2f4f9f) no-repeat center / 1px 5px, #f6f7fa;
}
.row label {
  display: flex;
  align-items: center;
  gap: 2px;
  height: 18px;
  white-space: nowrap;
}
.row label svg { flex: none; width: 16px; height: 16px; }
.row use { width: 16px; height: 16px; }
.row label span { padding: 0 2px; line-height: 17px; }
.row .strong { font-weight: 700; }
.row .selected span {
  outline: 1px dotted #e08a3c;
  outline-offset: -1px;
  background: #0078d7;
  color: #fff;
}
.row input {
  display: grid;
  place-items: center;
  width: 13px;
  height: 13px;
  margin: 0 1px 1px 0;
  border: 1px solid #45474e;
  appearance: none;
  background: linear-gradient(135deg, #fbfcfe, #cdd4e1);
}
.row input[type="radio"] { border-radius: 50%; }
.row input::before { content: ""; }
.row input[type="checkbox"]:checked::before {
  width: 9px;
  height: 9px;
  background: #000;
  clip-path: polygon(0 40%, 18% 32%, 38% 58%, 82% 8%, 100% 16%, 42% 90%, 30% 90%);
}
.row .partial::before { width: 7px; height: 7px; background: #939393; }
.row input[type="radio"]:checked::before {
  width: 5px;
  height: 5px;
  border-radius: 50%;
  background: #000;
}
.callout { flex: none; width: 116px; height: 20px; }

.scroll {
  display: flex;
  flex: none;
  flex-direction: column;
  width: 16px;
  background: #f0f0f0;
}
.scroll button { display: flex; flex: none; justify-content: center; padding: 6px 0; }
.scroll svg { width: 9px; height: 6px; }
.track { flex: 277; }
.thumb { flex: 247; background: #cdcdcd; }

/* Model view */
.view {
  position: relative;
  flex: 1;
  min-width: 0;
  margin-left: 3px;
  overflow: hidden;
  border-top: 3px solid #6c6c6c;
  border-left: 2px solid #6c6c6c;
  background: #000;
}
.view p {
  position: absolute;
  top: 5px;
  left: 5px;
  margin: 0;
  color: #fff;
  font: 11px/14px "Liberation Sans", Arial, sans-serif;
}
.model { width: 100%; height: 100%; }
```
